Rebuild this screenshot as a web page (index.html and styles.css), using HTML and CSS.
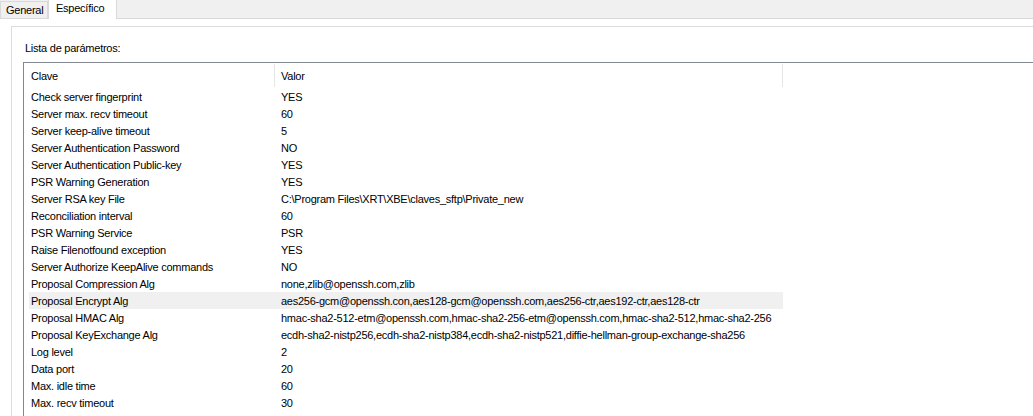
FILE: index.html
```html
<!DOCTYPE html>
<html>
<head>
<meta charset="utf-8">
<link rel="stylesheet" href="styles.css">
</head>
<body>
<div class="tabstrip">
  <div class="tab">General</div>
  <div class="tab active">Específico</div>
</div>
<div class="page">
  <div class="group">
    <div class="label">Lista de parámetros:</div>
    <div class="list">
      <div class="header">
        <div class="hcell first">Clave</div>
        <div class="hcell second">Valor</div>
      </div>
      <div class="rows">
        <div class="row"><span>Check server fingerprint</span><span>YES</span></div>
        <div class="row"><span>Server max. recv timeout</span><span>60</span></div>
        <div class="row"><span>Server keep-alive timeout</span><span>5</span></div>
        <div class="row"><span>Server Authentication Password</span><span>NO</span></div>
        <div class="row"><span>Server Authentication Public-key</span><span>YES</span></div>
        <div class="row"><span>PSR Warning Generation</span><span>YES</span></div>
        <div class="row"><span>Server RSA key File</span><span>C:\Program Files\XRT\XBE\claves_sftp\Private_new</span></div>
        <div class="row"><span>Reconciliation interval</span><span>60</span></div>
        <div class="row"><span>PSR Warning Service</span><span>PSR</span></div>
        <div class="row"><span>Raise Filenotfound exception</span><span>YES</span></div>
        <div class="row"><span>Server Authorize KeepAlive commands</span><span>NO</span></div>
        <div class="row"><span>Proposal Compression Alg</span><span>none,zlib@openssh.com,zlib</span></div>
        <div class="row hl"><span>Proposal Encrypt Alg</span><span>aes256-gcm@openssh.con,aes128-gcm@openssh.com,aes256-ctr,aes192-ctr,aes128-ctr</span></div>
        <div class="row"><span>Proposal HMAC Alg</span><span>hmac-sha2-512-etm@openssh.com,hmac-sha2-256-etm@openssh.com,hmac-sha2-512,hmac-sha2-256</span></div>
        <div class="row"><span>Proposal KeyExchange Alg</span><span>ecdh-sha2-nistp256,ecdh-sha2-nistp384,ecdh-sha2-nistp521,diffie-hellman-group-exchange-sha256</span></div>
        <div class="row"><span>Log level</span><span>2</span></div>
        <div class="row"><span>Data port</span><span>20</span></div>
        <div class="row"><span>Max. idle time</span><span>60</span></div>
        <div class="row"><span>Max. recv timeout</span><span>30</span></div>
      </div>
    </div>
  </div>
</div>
</body>
</html>
```

FILE: styles.css
```css
html, body {
  margin: 0;
  padding: 0;
}
body {
  width: 1033px;
  height: 416px;
  overflow: hidden;
  background: #ffffff;
  font-family: "Liberation Sans", Arial, sans-serif;
  font-size: 11px;
  letter-spacing: -0.25px;
  color: #000000;
}
.tabstrip {
  display: flex;
  align-items: flex-end;
  height: 18px;
  background: #f0f0f0;
  border-bottom: 1px solid #d9d9d9;
}
.tab {
  height: 16px;
  line-height: 17px;
  padding: 0 4px 0 5px;
  background: #f0f0f0;
  border: 1px solid #d9d9d9;
  border-bottom: none;
  width: 37px;
}
.tab.active {
  height: 19px;
  line-height: 17px;
  margin-bottom: -1px;
  background: #ffffff;
  width: 56px;
  padding-left: 7px;
  margin-left: 0;
}
.page {
  padding: 7px 0 0 11px;
  height: 390px;
  overflow: hidden;
}
.group {
  border-top: 1px solid #dcdcdc;
  border-left: 1px solid #dcdcdc;
  padding: 15px 0 0 11px;
  height: 374px;
  overflow: hidden;
}
.label {
  height: 20px;
  line-height: 13px;
  padding-left: 2px;
}
.list {
  border-top: 1px solid #828790;
  border-left: 1px solid #828790;
  height: 353px;
  overflow: hidden;
}
.header {
  display: flex;
  height: 25px;
}
.hcell {
  line-height: 24px;
  box-sizing: border-box;
  margin-top: 1px;
  height: 23px;
  border-right: 1px solid #e5e5e5;
}
.hcell.first {
  width: 251px;
  padding-left: 7px;
}
.hcell.second {
  width: 508px;
  padding-left: 6px;
}
.rows {
  padding-left: 5px;
}
.row {
  display: grid;
  grid-template-columns: 250px 504px;
  width: 754px;
  height: 17px;
  line-height: 18px;
  white-space: nowrap;
}
.row span {
  padding-left: 2px;
}
.row.hl {
  background: #f0f0f0;
}
```
